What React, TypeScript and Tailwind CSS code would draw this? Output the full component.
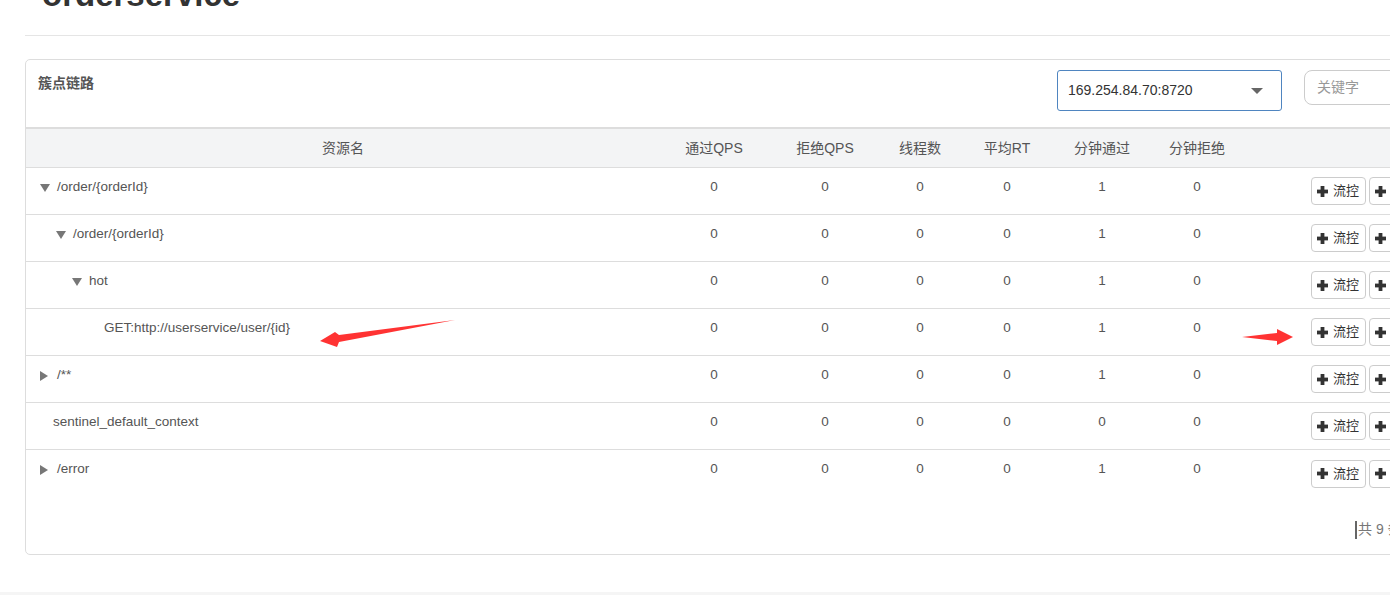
import React from 'react';

type Row = {
  name: string;
  level: number;
  toggle?: 'down' | 'right';
  vals: number[];
};

const rows: Row[] = [
  { name: '/order/{orderId}', level: 0, toggle: 'down', vals: [0, 0, 0, 0, 1, 0] },
  { name: '/order/{orderId}', level: 1, toggle: 'down', vals: [0, 0, 0, 0, 1, 0] },
  { name: 'hot', level: 2, toggle: 'down', vals: [0, 0, 0, 0, 1, 0] },
  { name: 'GET:http://userservice/user/{id}', level: 3, vals: [0, 0, 0, 0, 1, 0] },
  { name: '/**', level: 0, toggle: 'right', vals: [0, 0, 0, 0, 1, 0] },
  { name: 'sentinel_default_context', level: 0, vals: [0, 0, 0, 0, 0, 0] },
  { name: '/error', level: 0, toggle: 'right', vals: [0, 0, 0, 0, 1, 0] },
];

const cols = [
  { label: '通过QPS', w: 'w-[108px]' },
  { label: '拒绝QPS', w: 'w-[114px]' },
  { label: '线程数', w: 'w-[76px]' },
  { label: '平均RT', w: 'w-[98px]' },
  { label: '分钟通过', w: 'w-[92px]' },
  { label: '分钟拒绝', w: 'w-[98px]' },
];

const Plus = () => (
  <svg width="11" height="11" viewBox="0 0 11 11" className="shrink-0">
    <rect x="3.6" y="0" width="3.8" height="11" fill="#333" />
    <rect x="0" y="3.6" width="11" height="3.8" fill="#333" />
  </svg>
);

const ActionButton = ({ label }: { label: string }) => (
  <button className="flex h-[28px] items-center gap-[5px] rounded-[4px] border border-[#ccc] bg-white pl-[5px] pr-[6px] text-[13px] text-[#333]">
    <Plus />
    <span>{label}</span>
  </button>
);

const Toggle = ({ dir }: { dir: 'down' | 'right' }) =>
  dir === 'down' ? (
    <svg width="10" height="8" viewBox="0 0 10 8" className="mr-[7px] mt-[1px]">
      <polygon points="0,0 10,0 5,8" fill="#777" />
    </svg>
  ) : (
    <svg width="8" height="10" viewBox="0 0 8 10" className="mr-[9px] mt-[1px]">
      <polygon points="0,0 8,5 0,10" fill="#777" />
    </svg>
  );

const NameCell = ({ row }: { row: Row }) => {
  const pad = row.toggle ? 14 + 16 * row.level : 27 + 17 * row.level;
  return (
    <div className="flex w-[634px] items-center pt-[9px] leading-[20px]" style={{ paddingLeft: pad }}>
      {row.toggle && <Toggle dir={row.toggle} />}
      <span>{row.name}</span>
    </div>
  );
};

export default function App() {
  return (
    <div
      className="relative h-[595px] w-[1390px] overflow-hidden bg-white text-[#555]"
      style={{ fontFamily: '"Liberation Sans", "Noto Sans CJK SC", sans-serif' }}
    >
      <div className="pl-[42px]">
        <h1 className="mt-[-22px] text-[33px] font-bold leading-none text-[#333]">orderservice</h1>
      </div>
      <div className="ml-[25px] mt-[24px] h-px w-[1400px] bg-[#e5e5e5]" />

      <div className="ml-[25px] mt-[23px] w-[1500px] rounded-[5px] border border-[#ddd] bg-white">
        <div className="flex h-[67px] items-start">
          <div className="w-[1031px] pl-[12px] pt-[13px] text-[14px] font-bold text-[#555]">簇点链路</div>
          <div className="mt-[10px] flex h-[41px] w-[225px] items-center justify-between rounded-[3px] border border-[#4f85c0] pl-[10px] pr-[18px] text-[14px] text-[#333]">
            <span>169.254.84.70:8720</span>
            <svg width="12" height="6" viewBox="0 0 12 6">
              <polygon points="0,0 12,0 6,6" fill="#666" />
            </svg>
          </div>
          <div className="ml-[22px] mt-[10px] flex h-[35px] w-[180px] items-center rounded-[8px] border border-[#ccc] pl-[12px] text-[14px] text-[#999]">
            关键字
          </div>
        </div>

        <div className="flex h-[41px] items-center border-t-2 border-b border-t-[#ddd] border-b-[#ddd] bg-[#f3f4f5] text-[14px]">
          <div className="w-[634px] text-center">资源名</div>
          {cols.map((c) => (
            <div key={c.label} className={`${c.w} text-center`}>
              {c.label}
            </div>
          ))}
        </div>

        {rows.map((row, i) => (
          <div
            key={i}
            className={`flex h-[47px] items-start text-[13.5px] ${i < rows.length - 1 ? 'border-b border-[#ddd]' : ''}`}
          >
            <NameCell row={row} />
            {cols.map((c, j) => (
              <div key={c.label} className={`${c.w} pt-[9px] text-center leading-[20px]`}>
                {row.vals[j]}
              </div>
            ))}
            <div className="flex h-full items-center gap-[3px] pl-[65px]">
              <ActionButton label="流控" />
              <ActionButton label="降级" />
            </div>
          </div>
        ))}

        <div className="flex h-[57px] items-center pl-[1329px] pt-[8px] text-[14px] text-[#777]">
          <span className="mr-[1px] inline-block h-[18px] w-[2px] bg-[#666]" />
          <span>共 9 条记录</span>
        </div>
      </div>

      <div className="absolute bottom-0 left-0 h-[3px] w-full bg-[#f5f5f5]" />

      <svg className="pointer-events-none absolute left-0 top-0" width="1390" height="595">
        <polygon points="455,320 339,335 335,332 320,341 337,347 339,342" fill="#f33" />
        <polygon points="1242,337 1277,333 1277,329 1293,337 1277,345 1277,341" fill="#f33" />
      </svg>
    </div>
  );
}
